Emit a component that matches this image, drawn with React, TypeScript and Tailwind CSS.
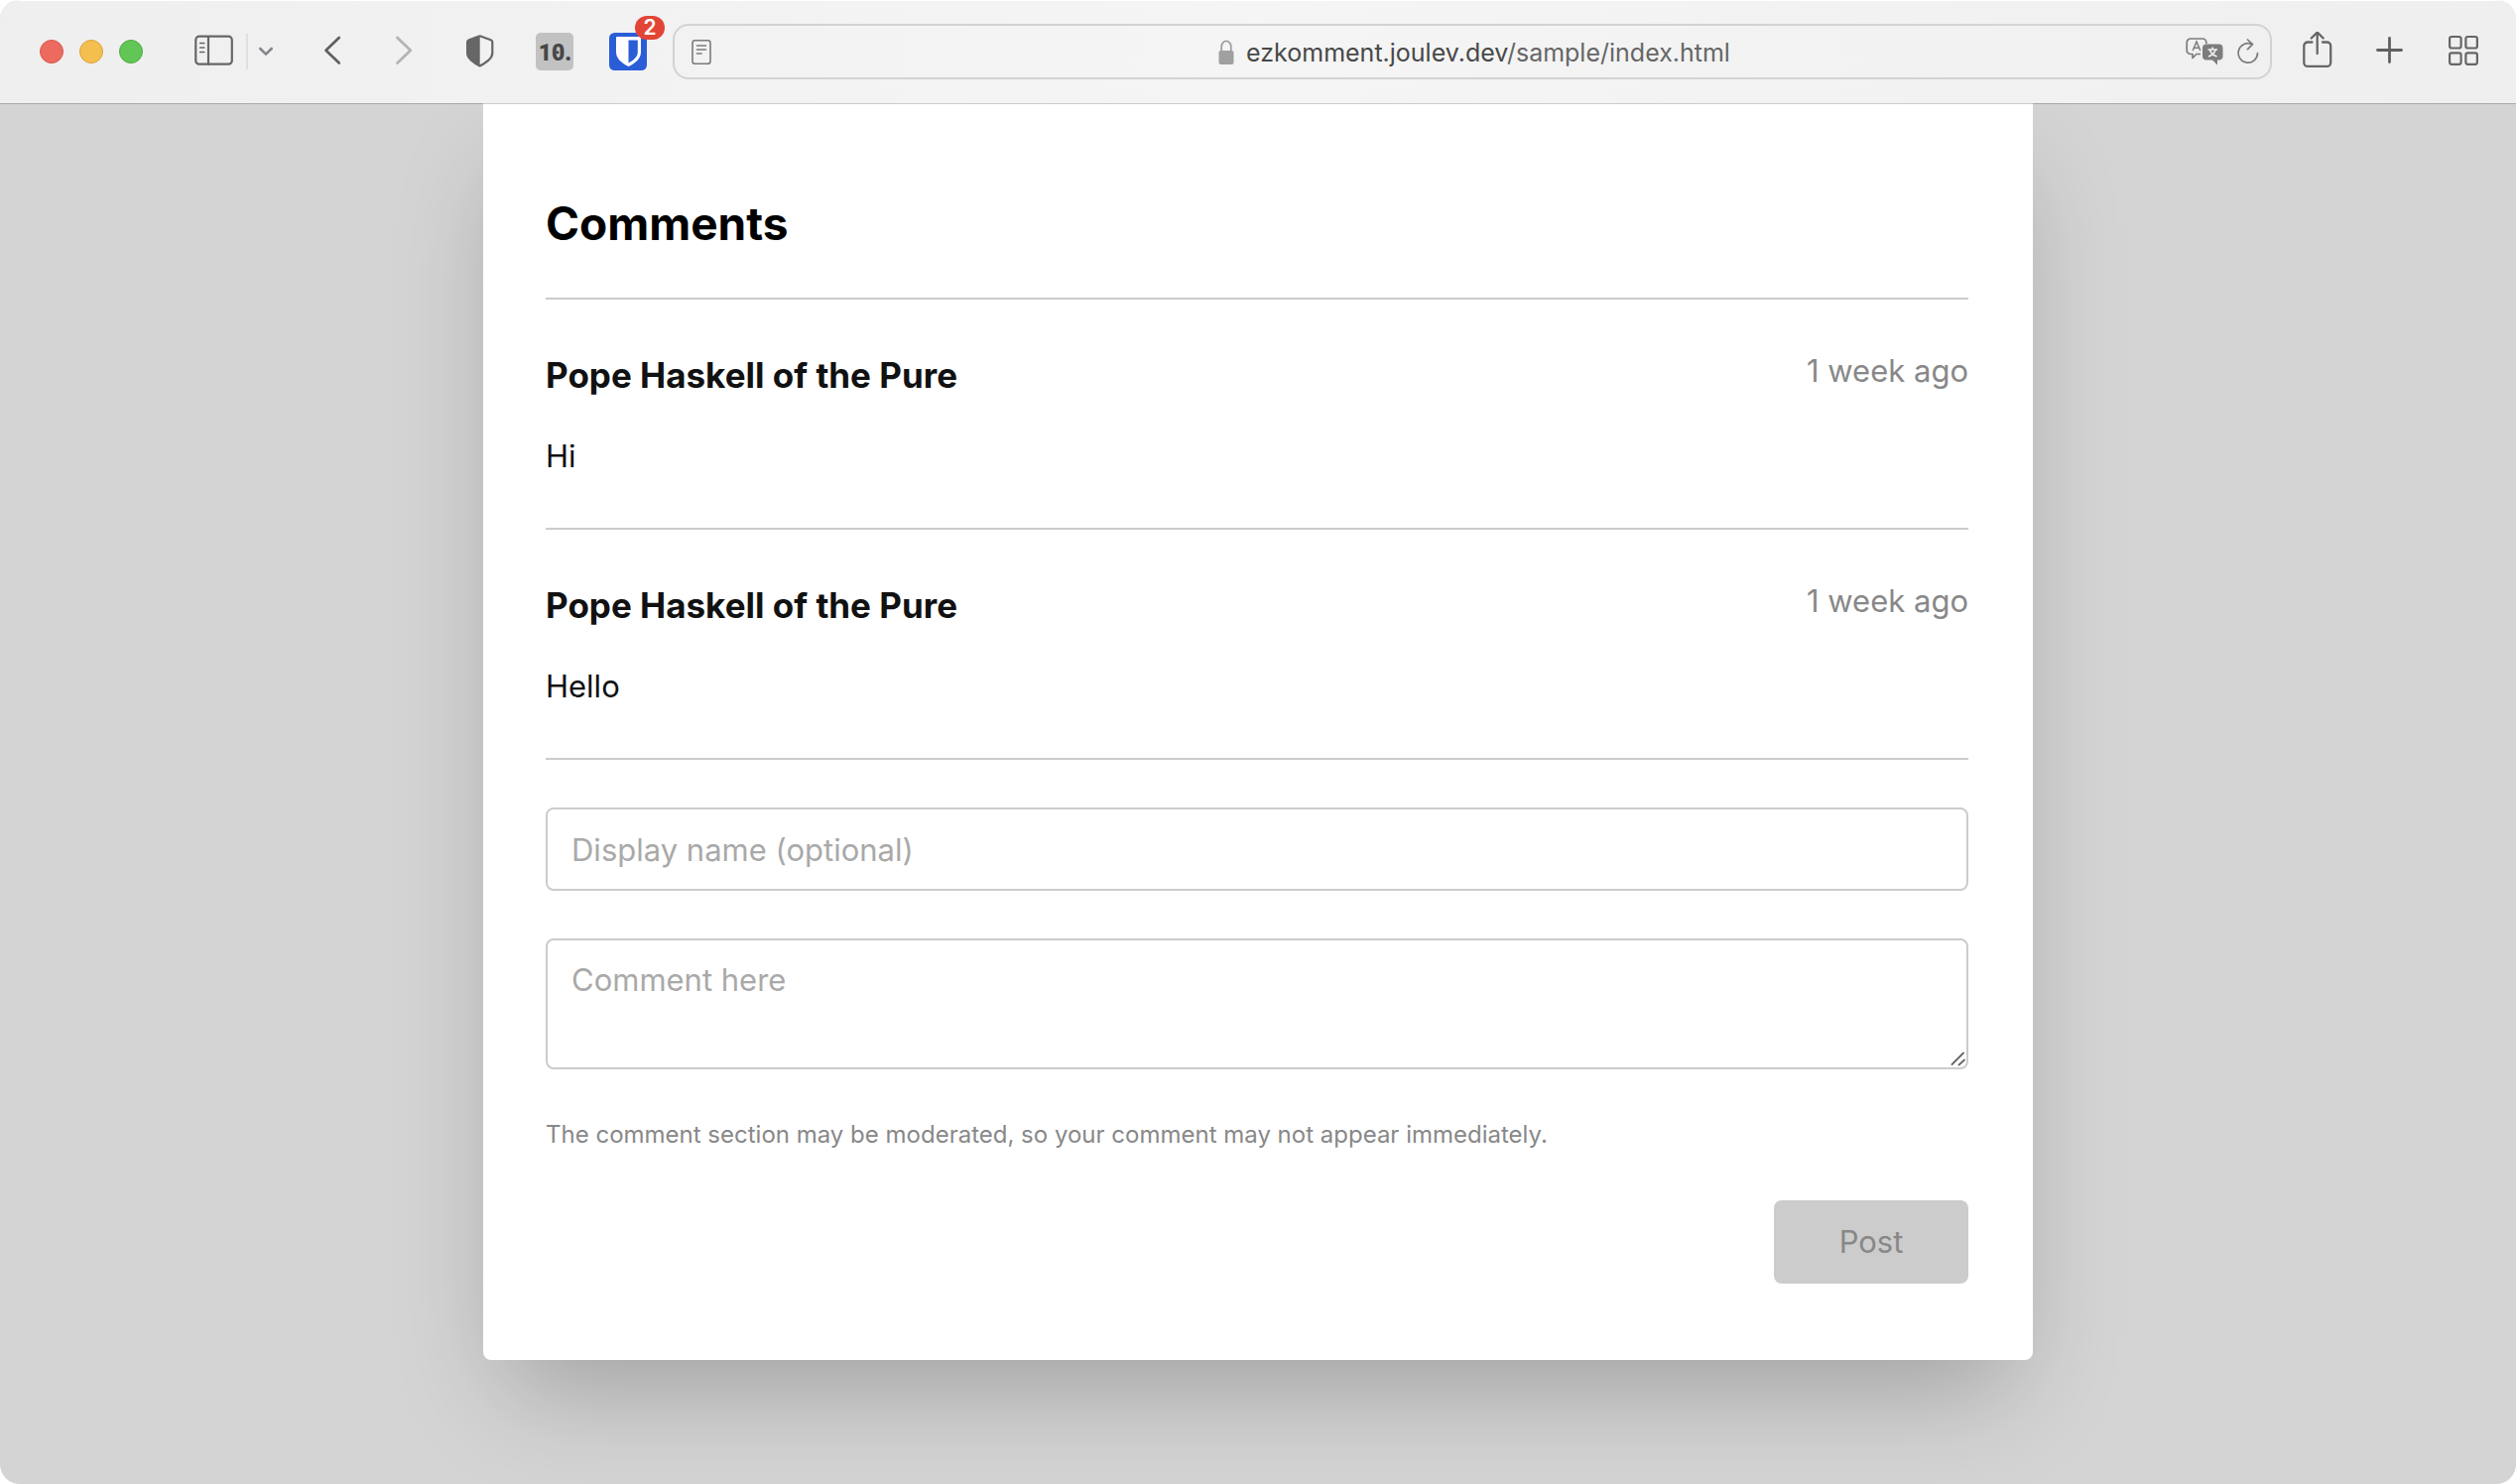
import { useState } from 'react';

const comments = [
  { id: 1, author: 'Pope Haskell of the Pure', time: '1 week ago', body: 'Hi' },
  { id: 2, author: 'Pope Haskell of the Pure', time: '1 week ago', body: 'Hello' },
];

function AddressBar() {
  return (
    <div className="ml-[26px] flex h-14 flex-1 items-center rounded-2xl border-2 border-[#d3d3d3] pl-[17px] pr-[11px]">
      <button aria-label="Reader view">
        <svg width="20" height="28" viewBox="0 0 20 28" fill="none" stroke="#7b7b7b" strokeWidth="1.6" strokeLinecap="round">
          <rect x="1" y="2.8" width="18" height="23.5" rx="2.6" />
          <path d="M5.500 8h9M5.500 12h9M5.500 16h4.500" />
        </svg>
      </button>
      <div className="flex flex-1 items-center justify-center gap-3 pl-[52px]">
        <svg width="16" height="28" viewBox="0 0 16 28" fill="none">
          <path d="M3.200 14V9a4.800 5.600 0 0 1 9.600 0v5" stroke="#a0a0a0" strokeWidth="1.8" />
          <rect x="0.500" y="13" width="15" height="14" rx="2" fill="#a0a0a0" />
        </svg>
        <a href="#top" className="pt-0.5 text-[25px] leading-8 text-[#666]">
          <span className="text-[#484848]">ezkomment.joulev.dev</span>/sample/index.html
        </a>
      </div>
      <button aria-label="Translate">
        <svg width="38" height="28" viewBox="0 0 38 28" fill="none">
          <path
            d="M15 16.500H11l-4 4v-4H5a3.800 3.800 0 0 1-3.800-3.800V4.800A3.800 3.800 0 0 1 5 1h12a3.800 3.800 0 0 1 3.800 3.800V6"
            stroke="#7d7d7d"
            strokeWidth="1.7"
            strokeLinejoin="round"
          />
          <path d="M7.200 13 11 4l3.800 9M8.600 10.200h4.800" stroke="#7d7d7d" strokeWidth="1.5" />
          <path d="M21 6.500h12.500a4 4 0 0 1 4 4v8a4 4 0 0 1-4 4H32v5l-5-5h-6a4 4 0 0 1-4-4v-8a4 4 0 0 1 4-4Z" fill="#7d7d7d" />
          <path d="M22.500 12h9.500M27.200 9.500V12M24.500 12.300c.8 3.200 3.500 5.600 7 6.700M30 12.300c-.8 3.200-3.500 5.600-7 6.700" stroke="#f0f0f0" strokeWidth="1.600" />
        </svg>
      </button>
      <button aria-label="Reload" className="ml-[14px]">
        <svg width="22" height="28" viewBox="0 0 22 28" fill="none" stroke="#7b7b7b" strokeWidth="1.7" strokeLinecap="round" strokeLinejoin="round">
          <path d="M20.500 15.500A9.700 9.700 0 1 1 14.500 6.500M10.500 2l5 4.700-5 5" />
        </svg>
      </button>
    </div>
  );
}

function Toolbar() {
  return (
    <header className="relative z-10 flex h-[104px] items-center bg-linear-to-r from-[#efefef] via-[#f5f5f5] to-[#efefef] pr-[38px] pl-10 shadow-[0_1px_0_rgba(0,0,0,0.2),inset_0_1px_0_#fff]">
      <div className="flex gap-4">
        <button aria-label="Close window" className="size-6 rounded-full border border-[#d8564c] bg-[#ed6a5f]" />
        <button aria-label="Minimize window" className="size-6 rounded-full border border-[#d9a33f] bg-[#f5bf50]" />
        <button aria-label="Zoom window" className="size-6 rounded-full border border-[#4faa3f] bg-[#62c656]" />
      </div>
      <button aria-label="Show sidebar" className="ml-[52px]">
        <svg width="40" height="40" viewBox="0 0 40 40" fill="none" stroke="#666" strokeWidth="2.200" strokeLinecap="round">
          <rect x="1.300" y="4.700" width="36.500" height="28" rx="3.500" />
          <path d="M14 5v28" />
          <path d="M5.800 11.500h4M5.800 16h4M5.800 20.500h4" strokeWidth="1.700" />
        </svg>
      </button>
      <div className="ml-3 h-9 w-0.5 bg-[#dfdfdf]" />
      <button aria-label="Tab groups" className="ml-[10px]">
        <svg width="16" height="40" viewBox="0 0 16 40" fill="none" stroke="#86868b" strokeWidth="2.600" strokeLinecap="round" strokeLinejoin="round">
          <path d="m2.300 17 5.700 5.700 5.700-5.700" />
        </svg>
      </button>
      <button aria-label="Back" className="ml-[50px]">
        <svg width="18" height="40" viewBox="0 0 18 40" fill="none" stroke="#606060" strokeWidth="2.700" strokeLinecap="round" strokeLinejoin="round">
          <path d="M15.800 6 2.500 18.700l13.300 12.800" />
        </svg>
      </button>
      <button aria-label="Forward" className="ml-[54px]" disabled>
        <svg width="18" height="40" viewBox="0 0 18 40" fill="none" stroke="#b3b3b3" strokeWidth="2.700" strokeLinecap="round" strokeLinejoin="round">
          <path d="M2.500 6 15.800 18.700 2.500 31.500" />
        </svg>
      </button>
      <button aria-label="Privacy report" className="ml-[54px]">
        <svg width="28" height="40" viewBox="0 0 28 40">
          <path
            d="M13.700 4.300 24.700 8.200q1.600.6 1.600 2.300v11q0 3.500-3.500 6.800-3.900 3.400-9.100 6.100-5.200-2.700-9.100-6.100-3.500-3.300-3.500-6.800v-11q0-1.700 1.600-2.300Z"
            fill="none"
            stroke="#666"
            strokeWidth="2.200"
            strokeLinejoin="round"
          />
          <path d="M13.700 4.300 2.700 8.200q-1.600.6-1.600 2.300v11q0 3.500 3.500 6.800 3.900 3.400 9.100 6.100Z" fill="#666" />
        </svg>
      </button>
      <button aria-label="10. extension" className="ml-[42px]">
        <svg width="38" height="38" viewBox="0 0 38 38">
          <rect width="38" height="38" rx="5" fill="#c2c2c2" />
          <text x="19.500" y="28" textAnchor="middle" className="font-[Roboto,sans-serif] text-[23px] font-black" fill="#474747">
            10.
          </text>
          <circle cx="22" cy="19.800" r="1.500" fill="#474747" />
        </svg>
      </button>
      <button aria-label="Bitwarden" className="relative ml-9">
        <svg width="38" height="38" viewBox="0 0 38 38">
          <rect width="38" height="38" rx="5.500" fill="#2b5dd7" />
          <path d="M8 4h23q1 0 1 1v14.500c0 6.500-5.500 11-12.500 14.500C12.500 30.500 7 26 7 19.500V5q0-1 1-1Z" fill="#fff" />
          <path d="M19.500 7.500h9.300v12c0 4.500-3.800 8-9.300 11Z" fill="#2b5dd7" />
        </svg>
        <span className="absolute -top-[17px] left-[26px] flex h-6 w-[30px] items-center justify-center rounded-full bg-[#e24436] text-[21px] font-semibold text-white">
          2
        </span>
      </button>
      <AddressBar />
      <button aria-label="Share" className="ml-[31px]">
        <svg width="30" height="40" viewBox="0 0 30 40" fill="none" stroke="#666" strokeWidth="2.300" strokeLinecap="round" strokeLinejoin="round">
          <path d="M9.500 10.500H5A3.700 3.700 0 0 0 1.300 14.200v17A3.700 3.700 0 0 0 5 34.900h19.500a3.700 3.700 0 0 0 3.700-3.700v-17a3.700 3.700 0 0 0-3.700-3.700H20" />
          <path d="M14.700 22V1M8.700 6.500l6-6 6 6" />
        </svg>
      </button>
      <button aria-label="New tab" className="ml-11">
        <svg width="28" height="40" viewBox="0 0 28 40" stroke="#606060" strokeWidth="2.800" strokeLinecap="round">
          <path d="M13.500 6.500v24M1.500 18.500h24" />
        </svg>
      </button>
      <button aria-label="Tab overview" className="ml-[45px]">
        <svg width="30" height="40" viewBox="0 0 30 40" fill="none" stroke="#666" strokeWidth="2.200">
          <rect x="1.100" y="5" width="11.500" height="11.500" rx="2" />
          <rect x="17.400" y="5" width="11.500" height="11.500" rx="2" />
          <rect x="1.100" y="21.300" width="11.500" height="11.500" rx="2" />
          <rect x="17.400" y="21.300" width="11.500" height="11.500" rx="2" />
        </svg>
      </button>
    </header>
  );
}

function App() {
  const [name, setName] = useState('');
  const [text, setText] = useState('');

  return (
    <div className="min-h-screen bg-white font-[Inter,sans-serif]">
      <div id="top" className="flex min-h-screen flex-col overflow-hidden rounded-[20px] bg-[#d4d4d4]">
        <Toolbar />
        <main className="mx-auto w-full max-w-[1562px] rounded-b-lg bg-white pt-[93px] pr-[65px] pb-[77px] pl-[63px] shadow-[0_50px_100px_-24px_rgba(0,0,0,0.25)]">
          <h1 className="pb-[47px] text-[46px] leading-[56px] font-bold text-black">Comments</h1>
          {comments.map((comment) => (
            <article key={comment.id} className="border-t-2 border-[#ccc] pt-[54px] pb-[52px]">
              <div className="flex items-start justify-between">
                <h2 className="text-[35px] leading-[44px] font-bold text-[#111]">{comment.author}</h2>
                <time className="text-[31px] leading-9 text-[#888]">{comment.time}</time>
              </div>
              <p className="mt-10 text-[31px] leading-10 text-[#111]">{comment.body}</p>
            </article>
          ))}
          <form className="flex flex-col gap-12 border-t-2 border-[#ccc] pt-12" onSubmit={(e) => e.preventDefault()}>
            <input
              type="text"
              aria-label="Display name"
              placeholder="Display name (optional)"
              value={name}
              onChange={(e) => setName(e.target.value)}
              className="h-[84px] w-full rounded-lg border-2 border-[#ccc] px-6 text-[31px] leading-10 placeholder:text-[#a9a9a9]"
            />
            <div className="relative">
              <textarea
                aria-label="Comment"
                placeholder="Comment here"
                value={text}
                onChange={(e) => setText(e.target.value)}
                className="block h-[132px] w-full resize-y rounded-lg border-2 border-[#ccc] px-6 py-5 text-[31px] leading-10 placeholder:text-[#a9a9a9] [&::-webkit-resizer]:bg-transparent"
              />
              <svg
                className="pointer-events-none absolute right-[3px] bottom-[3px]"
                width="16"
                height="16"
                viewBox="0 0 16 16"
                stroke="#666"
                strokeWidth="1.800"
                strokeLinecap="round"
              >
                <path d="M2.500 14 14 2.500M9.500 14.500 15 9.500" />
              </svg>
            </div>
            <p className="text-2xl leading-9 text-[#888]">
              The comment section may be moderated, so your comment may not appear immediately.
            </p>
            <button disabled className="h-[84px] w-[196px] self-end rounded-lg bg-[#ccc] text-[31px] text-[#888]">
              Post
            </button>
          </form>
        </main>
      </div>
    </div>
  );
}

export default App;
